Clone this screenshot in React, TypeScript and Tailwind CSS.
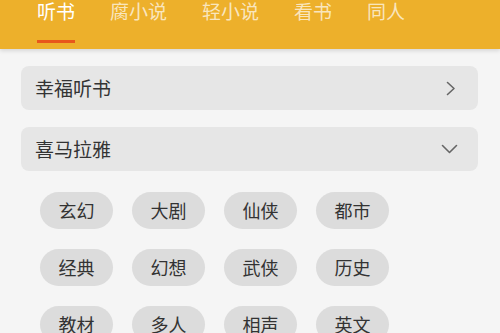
import { useState } from 'react';

const tabs = ['听书', '腐小说', '轻小说', '看书', '同人'];
const tags = ['玄幻', '大剧', '仙侠', '都市', '经典', '幻想', '武侠', '历史', '教材', '多人', '相声', '英文'];

function ChevronRight() {
    return (
        <svg width="10" height="15" viewBox="0 0 10 15" fill="none">
            <path d="M1.5 1.5 L8 7.5 L1.5 13.5" stroke="#666" strokeWidth="1.6" strokeLinecap="round" strokeLinejoin="round" />
        </svg>
    );
}

function ChevronDown() {
    return (
        <svg width="17" height="10" viewBox="0 0 17 10" fill="none">
            <path d="M1.5 1.5 L8.5 8.5 L15.5 1.5" stroke="#666" strokeWidth="1.6" strokeLinecap="round" strokeLinejoin="round" />
        </svg>
    );
}

export default function App() {
    const [active, setActive] = useState(0);

    return (
        <div
            className="w-[500px] h-[333px] overflow-hidden bg-[#f5f5f5]"
            style={{ fontFamily: '"Noto Sans CJK SC", "Noto Sans", sans-serif' }}
        >
            <div className="h-[49px] bg-[#edb02b] flex pl-[37px] gap-[35px] shadow-[0_2px_4px_rgba(0,0,0,0.12)] relative">
                {tabs.map((t, i) => (
                    <button
                        key={t}
                        onClick={() => setActive(i)}
                        className="flex flex-col items-stretch"
                    >
                        <span
                            className={
                                'text-[19px] leading-[22px] ' +
                                (i === active ? 'text-white' : 'text-white/70')
                            }
                        >
                            {t}
                        </span>
                        <span
                            className={
                                'mt-[18px] h-[3px] ' + (i === active ? 'bg-[#e8571b]' : 'bg-transparent')
                            }
                        />
                    </button>
                ))}
            </div>

            <div className="px-[21px] pt-[17px] pr-[22px] flex flex-col gap-[17px]">
                <div className="h-[44px] rounded-[8px] bg-[#e6e6e6] flex items-center justify-between pl-[14px] pr-[22px]">
                    <span className="text-[19px] text-[#333]">幸福听书</span>
                    <ChevronRight />
                </div>
                <div className="h-[44px] rounded-[8px] bg-[#e6e6e6] flex items-center justify-between pl-[14px] pr-[20px]">
                    <span className="text-[19px] text-[#333]">喜马拉雅</span>
                    <ChevronDown />
                </div>
            </div>

            <div className="pl-[40px] pt-[21px] grid grid-cols-[repeat(4,73px)] gap-x-[19px] gap-y-[20px]">
                {tags.map(t => (
                    <div
                        key={t}
                        className="h-[37px] rounded-full bg-[#dcdcdc] flex items-center justify-center text-[18px] text-[#333]"
                    >
                        {t}
                    </div>
                ))}
            </div>
        </div>
    );
}
